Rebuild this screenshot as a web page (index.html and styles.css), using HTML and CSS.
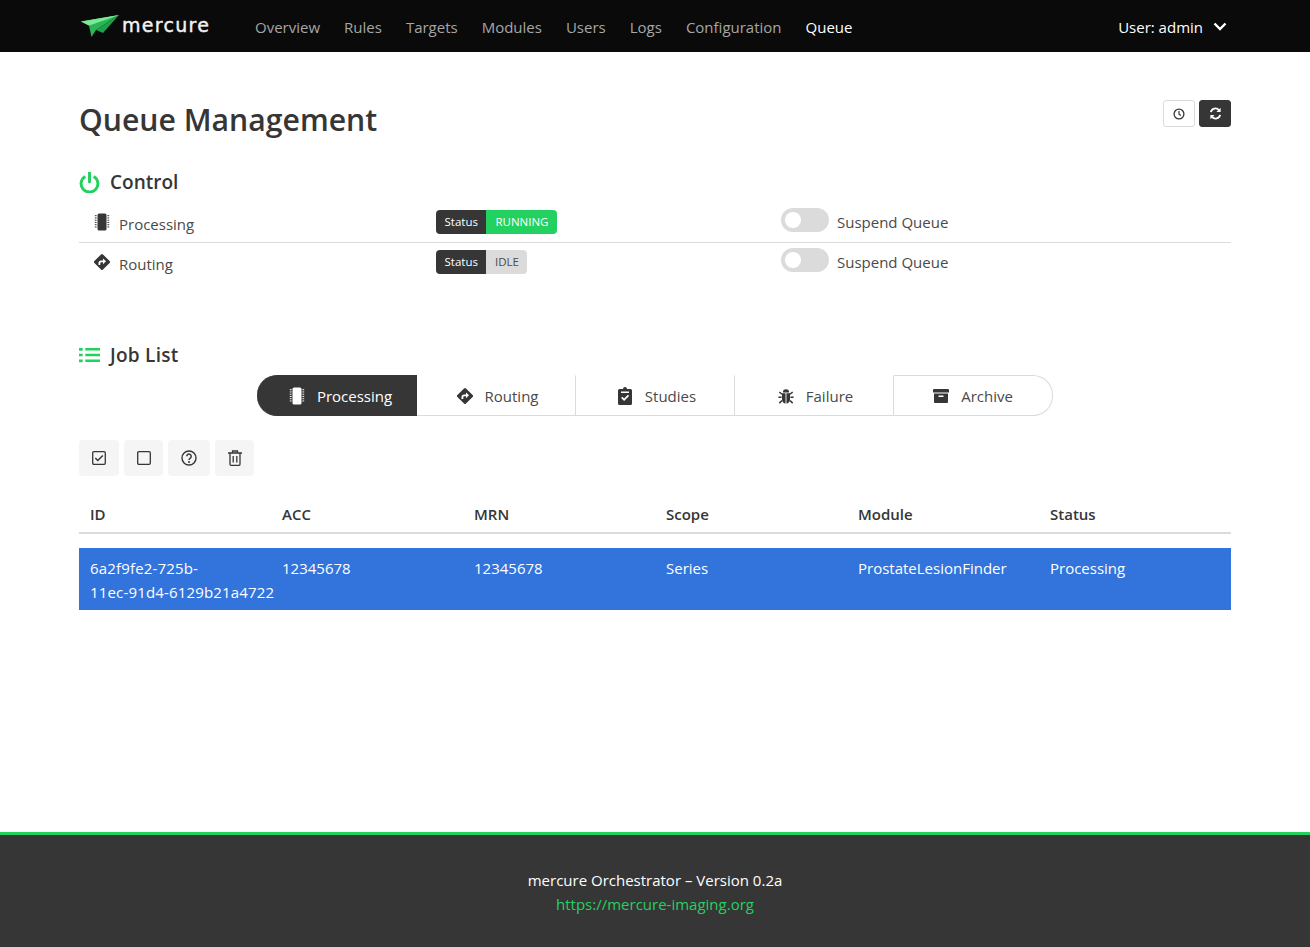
FILE: index.html
```html
<!DOCTYPE html>
<html lang="en">
<head>
    <meta charset="UTF-8">
    <meta name="viewport" content="width=device-width, initial-scale=1.0">
    <title>mercure | Queue</title>
    <link rel="stylesheet" href="styles.css">
</head>
<body>
    <svg class="icon-defs" width="0" height="0" aria-hidden="true">
        <symbol id="i-chip" viewBox="0 0 16 20">
            <rect x="3" y="0.5" width="10" height="19" rx="1.8" fill="currentColor"/>
            <path d="M0 3h2M0 5.5h2M0 8h2M0 10.5h2M0 13h2M0 15.5h2M14 3h2M14 5.5h2M14 8h2M14 10.5h2M14 13h2M14 15.5h2" stroke="currentColor" stroke-width="1.1" fill="none"/>
        </symbol>
        <symbol id="i-route" viewBox="0 0 16 16">
            <path fill="currentColor" fill-rule="evenodd" d="M7 .4a1.4 1.4 0 0 1 2 0l6.6 6.6a1.4 1.4 0 0 1 0 2L9 15.6a1.4 1.4 0 0 1-2 0L.4 9a1.4 1.4 0 0 1 0-2zM9 4.4v2H7.2A2.7 2.7 0 0 0 4.5 9.1v2h1.8v-2c0-.5.4-.9.9-.9H9v2l3-2.900z"/>
        </symbol>
        <symbol id="i-clipboard" viewBox="0 0 14 18">
            <path fill="currentColor" fill-rule="evenodd" d="M5 2a2 2 0 0 1 4 0h3.500A1.500 1.500 0 0 1 14 3.500v13a1.500 1.500 0 0 1-1.500 1.500h-11A1.500 1.500 0 0 1 0 16.500v-13A1.500 1.500 0 0 1 1.500 2zM3 4.500v1.500h8V4.500zM3.100 11l3 3 5-5-1.200-1.200L6.100 11.600 4.300 9.800z"/>
        </symbol>
        <symbol id="i-bug" viewBox="0 0 18 18">
            <path fill="currentColor" d="M5.500 5a3.500 3.500 0 0 1 7 0zM4.500 6h4v11.500c-2.300-.2-4-1.800-4-4.500zM9.500 6h4v7c0 2.700-1.700 4.300-4 4.500z"/>
            <path d="M4.500 7L1.500 4.500M13.500 7l3-2.500M4 10.500H.5M14 10.500h3.500M4.500 14l-3 3M13.500 14l3 3" stroke="currentColor" stroke-width="1.700" fill="none"/>
        </symbol>
        <symbol id="i-archive" viewBox="0 0 16 14">
            <path fill="currentColor" fill-rule="evenodd" d="M0 1a1 1 0 0 1 1-1h14a1 1 0 0 1 1 1v2.500H0zM1 4.500h14V13a1 1 0 0 1-1 1H2a1 1 0 0 1-1-1zM5.500 6.500V8h5V6.500z"/>
        </symbol>
    </svg>

    <nav class="navbar">
        <div class="container navbar-inner">
            <a href="#" class="brand">
                <svg class="brand-plane" viewBox="0 0 38 22" aria-hidden="true">
                    <path fill="#4fdc76" d="M0 6.500L38 0 12 12.500z"/>
                    <path fill="#2bb557" d="M38 0L8 10.500 10.500 22 15 15z"/>
                    <path fill="#1fa04a" d="M38 0L15 15l7 3z"/>
                    <path fill="#7be898" d="M0 6.500L38 0 8 10.500z"/>
                </svg>
                <span class="brand-name">mercure</span>
            </a>
            <div class="nav-links">
                <a href="#" class="nav-link">Overview</a>
                <a href="#" class="nav-link">Rules</a>
                <a href="#" class="nav-link">Targets</a>
                <a href="#" class="nav-link">Modules</a>
                <a href="#" class="nav-link">Users</a>
                <a href="#" class="nav-link">Logs</a>
                <a href="#" class="nav-link">Configuration</a>
                <a href="#" class="nav-link active">Queue</a>
            </div>
            <a href="#" class="nav-user">
                User: admin
                <svg class="chevron" viewBox="0 0 14 9" aria-hidden="true"><path d="M1.500 1.500L7 7l5.500-5.500" fill="none" stroke="currentColor" stroke-width="2.400"/></svg>
            </a>
        </div>
    </nav>

    <main class="container page">
        <div class="page-head">
            <h1 class="page-title">Queue Management</h1>
            <div class="head-buttons">
                <button class="head-btn" type="button" aria-label="History">
                    <svg viewBox="0 0 12 12" width="12" height="12" aria-hidden="true"><circle cx="6" cy="6" r="4.900" fill="none" stroke="currentColor" stroke-width="1.300"/><path d="M6 3v3.200l2 1.400" fill="none" stroke="currentColor" stroke-width="1.200"/></svg>
                </button>
                <button class="head-btn dark" type="button" aria-label="Refresh">
                    <svg viewBox="0 0 14 14" width="13" height="13" aria-hidden="true"><path d="M2 5.500A5 5 0 0 1 10.700 3.300" fill="none" stroke="currentColor" stroke-width="2"/><path d="M12.500.800v4.500H8z" fill="currentColor"/><path d="M12 8.500A5 5 0 0 1 3.300 10.700" fill="none" stroke="currentColor" stroke-width="2"/><path d="M1.500 13.200V8.700H6z" fill="currentColor"/></svg>
                </button>
            </div>
        </div>

        <h2 class="section-title">
            <svg class="section-icon" viewBox="0 0 20 20" aria-hidden="true"><path d="M6 4.200a8 8 0 1 0 8 0" fill="none" stroke="currentColor" stroke-width="2.800"/><path d="M10 .5v9" stroke="currentColor" stroke-width="2.800" stroke-linecap="round"/></svg>
            Control
        </h2>
        <div class="control-row">
            <div class="control-name"><svg class="row-icon" aria-hidden="true"><use href="#i-chip"/></svg>Processing</div>
            <div class="tags"><span class="tag dark">Status</span><span class="tag green">RUNNING</span></div>
            <label class="switch-label"><span class="switch"></span>Suspend Queue</label>
        </div>
        <div class="control-row last">
            <div class="control-name"><svg class="row-icon" aria-hidden="true"><use href="#i-route"/></svg>Routing</div>
            <div class="tags"><span class="tag dark">Status</span><span class="tag light">IDLE</span></div>
            <label class="switch-label"><span class="switch"></span>Suspend Queue</label>
        </div>

        <h2 class="section-title joblist">
            <svg class="section-icon list" viewBox="0 0 20 15" aria-hidden="true"><path d="M6 2h14M6 7.500h14M6 13h14" stroke="currentColor" stroke-width="2.400"/><path d="M0 .8h3.500v2.600H0zM0 6.200h3.500v2.600H0zM0 11.700h3.500v2.600H0z" fill="currentColor"/></svg>
            Job List
        </h2>

        <div class="tabs">
            <a href="#" class="tab active"><svg class="tab-icon" aria-hidden="true"><use href="#i-chip"/></svg>Processing</a>
            <a href="#" class="tab"><svg class="tab-icon" aria-hidden="true"><use href="#i-route"/></svg>Routing</a>
            <a href="#" class="tab"><svg class="tab-icon" aria-hidden="true"><use href="#i-clipboard"/></svg>Studies</a>
            <a href="#" class="tab"><svg class="tab-icon" aria-hidden="true"><use href="#i-bug"/></svg>Failure</a>
            <a href="#" class="tab last"><svg class="tab-icon" aria-hidden="true"><use href="#i-archive"/></svg>Archive</a>
        </div>

        <div class="tools">
            <button class="tool" type="button" aria-label="Select all">
                <svg viewBox="0 0 14 14" width="14" height="14" aria-hidden="true"><rect x=".7" y=".7" width="12.600" height="12.600" rx="1.200" fill="none" stroke="currentColor" stroke-width="1.300"/><path d="M3.300 7l2.500 2.500 5-5" fill="none" stroke="currentColor" stroke-width="1.500"/></svg>
            </button>
            <button class="tool narrow" type="button" aria-label="Select none">
                <svg viewBox="0 0 14 14" width="14" height="14" aria-hidden="true"><rect x=".7" y=".7" width="12.600" height="12.600" rx="1.200" fill="none" stroke="currentColor" stroke-width="1.300"/></svg>
            </button>
            <button class="tool wide" type="button" aria-label="Details">
                <svg viewBox="0 0 16 16" width="16" height="16" aria-hidden="true"><circle cx="8" cy="8" r="7" fill="none" stroke="currentColor" stroke-width="1.400"/><path d="M5.800 6.300a2.200 2.200 0 1 1 3.500 1.800c-.8.500-1.300.9-1.300 1.800" fill="none" stroke="currentColor" stroke-width="1.500"/><circle cx="8" cy="12" r="1" fill="currentColor"/></svg>
            </button>
            <button class="tool narrow" type="button" aria-label="Delete">
                <svg viewBox="0 0 14 16" width="14" height="16" aria-hidden="true"><path d="M0 3h14M4.500 3V1h5v2M2 3v11.300a1 1 0 0 0 1 1h8a1 1 0 0 0 1-1V3M5.200 6v6.500M8.800 6v6.500" fill="none" stroke="currentColor" stroke-width="1.300"/></svg>
            </button>
        </div>

        <table class="jobs">
            <thead>
                <tr><th>ID</th><th>ACC</th><th>MRN</th><th>Scope</th><th>Module</th><th>Status</th></tr>
            </thead>
            <tbody>
                <tr class="selected">
                    <td class="job-id">6a2f9fe2-725b-<br>11ec-91d4-6129b21a4722</td>
                    <td>12345678</td>
                    <td>12345678</td>
                    <td>Series</td>
                    <td>ProstateLesionFinder</td>
                    <td>Processing</td>
                </tr>
            </tbody>
        </table>
    </main>

    <footer class="footer">
        <div>mercure Orchestrator &ndash; Version 0.2a</div>
        <a href="#" class="footer-link">https://mercure-imaging.org</a>
    </footer>
</body>
</html>
```

FILE: styles.css
```css
* { margin: 0; padding: 0; box-sizing: border-box; }
html, body { height: 100%; }
body { font-family: "Open Sans", "Noto Sans", sans-serif; font-size: 15px; line-height: 24px; color: #4a4a4a; background-color: #fff; display: flex; flex-direction: column; min-height: 947px; }
a { text-decoration: none; color: inherit; }
button { font: inherit; cursor: pointer; }
.icon-defs { position: absolute; }
.container { width: 1152px; margin: 0 auto; }

.navbar { background-color: #0a0a0a; height: 52px; flex: none; }
.navbar-inner { display: flex; align-items: center; height: 52px; }
.brand { display: flex; align-items: center; width: 164px; padding-left: 2px; }
.brand-plane { width: 38px; height: 22px; }
.brand-name { font-family: "DejaVu Sans", sans-serif; font-size: 19px; font-weight: 400; color: #f2f2f2; margin-left: 3px; margin-top: -2px; letter-spacing: 1.3px; -webkit-text-stroke: .4px #f2f2f2; }
.nav-links { display: flex; gap: 24px; flex: 1; padding-left: 12px; padding-top: 1px; }
.nav-link { color: #a6a6a6; }
.nav-link.active { color: #fff; }
.nav-user { display: flex; align-items: center; gap: 10px; color: #fff; padding-right: 4px; padding-top: 1px; }
.chevron { width: 14px; height: 9px; }

.page { flex: 1; }
.page-head { display: flex; justify-content: space-between; padding-top: 48px; }
.page-title { font-size: 30.2px; line-height: 40px; font-weight: 600; color: #363636; }
.head-buttons { display: flex; gap: 4px; }
.head-btn { width: 32px; height: 27px; background-color: #fff; border: 1px solid #dbdbdb; border-radius: 3px; color: #363636; display: flex; align-items: center; justify-content: center; }
.head-btn.dark { background-color: #363636; border-color: #363636; color: #fff; }

.section-title { display: flex; align-items: center; font-size: 19px; line-height: 28px; font-weight: 600; color: #363636; margin-top: 28px; margin-bottom: 8px; }
.section-title.joblist { margin-top: 57px; margin-bottom: 6px; letter-spacing: .25px; }
.section-icon { width: 21px; height: 21px; color: #23d160; margin-right: 10px; }
.section-icon.list { height: 16px; }

.control-row { display: flex; height: 39px; padding-top: 4px; border-bottom: 1px solid #dbdbdb; }
.control-row.last { height: 41px; padding-top: 5px; border-bottom: 0; }
.control-name { width: 357px; display: flex; align-items: center; height: 32px; padding-left: 15px; color: #4a4a4a; }
.row-icon { width: 16px; height: 18px; color: #363636; margin-right: 9px; margin-top: -4px; }
.tags { display: flex; width: 345px; height: 24px; margin-top: 2px; }
.tag { display: flex; align-items: center; height: 24px; padding: 0 8.5px; font-size: 11.5px; }
.tag.dark { background-color: #363636; color: #fff; border-radius: 4px 0 0 4px; }
.tag.green { background-color: #23d160; color: #fff; border-radius: 0 4px 4px 0; padding: 0 9px; }
.tag.light { background-color: #dbdbdb; color: #4a4a4a; border-radius: 0 4px 4px 0; }
.switch-label { display: flex; align-items: center; height: 28px; color: #4a4a4a; }
.switch { position: relative; width: 48px; height: 24px; border-radius: 12px; background-color: #dbdbdb; margin-right: 8px; margin-top: -4px; }
.switch::before { content: ""; position: absolute; left: 4px; top: 4px; width: 16px; height: 16px; border-radius: 50%; background-color: #fff; }

.tabs { display: flex; justify-content: center; }
.tab { display: flex; align-items: center; justify-content: center; width: 159px; height: 41px; padding-left: 3px; border: 1px solid transparent; border-right-color: #dbdbdb; border-bottom-color: #dbdbdb; border-left: 0; color: #4a4a4a; }
.tab.active { width: 160px; padding-left: 8px; background-color: #363636; border-color: #363636; border-radius: 20px 0 0 20px; color: #fff; }
.tab.last { padding-left: 0; border-top-color: #dbdbdb; border-radius: 0 20px 20px 0; }
.tab-icon { width: 16px; height: 18px; margin-right: 12px; color: #363636; }
.tab.active .tab-icon { color: #fff; }

.tools { display: flex; gap: 5px; margin-top: 24px; }
.tool { width: 40px; height: 36px; background-color: #f5f5f5; border: 0; border-radius: 4px; color: #363636; display: flex; align-items: center; justify-content: center; }
.tool.wide { width: 42px; }
.tool.narrow { width: 39px; }

.jobs { width: 100%; border-collapse: collapse; table-layout: fixed; margin-top: 18px; }
.jobs th { text-align: left; font-weight: 600; color: #363636; padding: 8px 11px 6px; height: 37px; border-bottom: 2px solid #dbdbdb; }
.jobs td { padding: 8px 1px 6px 11px; vertical-align: top; }
.jobs tbody::before { content: ""; display: block; height: 14px; }
.jobs .job-id { white-space: nowrap; letter-spacing: .17px; }
.selected { background-color: #3273dc; color: #fff; }

.footer { flex: none; height: 115px; background-color: #363636; border-top: 3px solid #23d160; color: #fff; text-align: center; padding-top: 33px; }
.footer-link { color: #23d160; display: block; }
```
